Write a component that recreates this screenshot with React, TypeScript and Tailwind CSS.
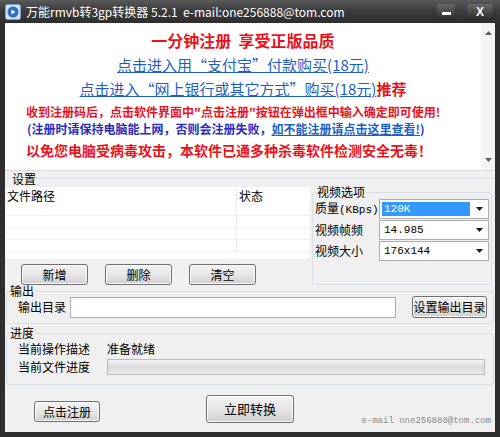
import React from 'react';

const cjk = "font-['Noto_Sans_CJK_SC',sans-serif]";

function WinButton({ label, className }: { label: string; className?: string }) {
  return (
    <button
      className={`flex items-center justify-center rounded-[3px] border border-[#707070] bg-gradient-to-b from-[#f4f4f4] via-[#e6e6e6] to-[#cfcfcf] text-[12px] text-black shadow-[inset_0_0_0_1px_#fcfcfc] ${className ?? ''}`}
    >
      {label}
    </button>
  );
}

function Combo({ value, selected }: { value: string; selected?: boolean }) {
  return (
    <div className="flex h-[20px] w-[110px] items-center border border-[#abadb3] bg-white pl-[2px]">
      <div
        className={`flex h-[14px] flex-1 items-center px-[2px] font-['Liberation_Mono',monospace] text-[11px] ${
          selected ? 'bg-[#3399ff] text-white' : 'text-black'
        }`}
      >
        {value}
      </div>
      <div className="flex w-[18px] justify-center">
        <svg width="7" height="4" viewBox="0 0 7 4">
          <path d="M0 0h7L3.5 4z" fill="#1a1a2a" />
        </svg>
      </div>
    </div>
  );
}

export default function App() {
  return (
    <div className={`flex h-[437px] w-[500px] flex-col overflow-hidden bg-[#2e2e2e] ${cjk}`}>
      {/* title bar */}
      <div className="flex h-[23px] items-center bg-gradient-to-b from-[#5a5a5a] via-[#3a3a3a] to-[#2e2e2e] pl-[5px] pr-[7px]">
        <svg width="16" height="16" viewBox="0 0 16 16">
          <rect x="0.5" y="0.5" width="15" height="15" rx="2" fill="#cfe3f5" stroke="#7aa0c8" />
          <circle cx="8" cy="8" r="5.5" fill="#2f6fc0" />
          <path d="M6.5 5.5v5l4-2.5z" fill="#ffffff" />
        </svg>
        <span className="ml-[5px] text-[12px] text-white">万能rmvb转3gp转换器 5.2.1&nbsp;&nbsp;e-mail:one256888@tom.com</span>
        <div className="ml-auto flex items-center gap-[12px]">
          <div className="flex h-[16px] w-[18px] items-center justify-center rounded-[2px] bg-gradient-to-b from-[#6a6a6a] to-[#2a2a2a]">
            <div className="mt-[4px] h-[3px] w-[9px] bg-white" />
          </div>
          <div className="flex h-[16px] w-[26px] items-center justify-center rounded-[2px] bg-gradient-to-b from-[#6a6a6a] to-[#2a2a2a] text-[12px] font-bold text-white font-['Liberation_Sans',sans-serif]">
            X
          </div>
        </div>
      </div>

      {/* client area */}
      <div className="mx-[5px] flex flex-1 flex-col bg-[#f0f0f0]">
        {/* top info pane */}
        <div className="flex h-[148px] border-b border-[#d9d9d9] bg-white">
          <div className="flex flex-1 flex-col pt-[6px]">
            <div className="h-[22px] text-center text-[16px] font-bold leading-[22px] text-[#e8131d]">一分钟注册&nbsp;&nbsp;享受正版品质</div>
            <div className="mt-[2px] h-[24px] text-center text-[15px] leading-[24px] text-[#1b5fc9] underline">点击进入用“支付宝”付款购买(18元)</div>
            <div className="h-[24px] text-center text-[15px] leading-[24px] text-[#1b5fc9]">
              <span className="underline">点击进入“网上银行或其它方式”购买(18元)</span>
              <span className="font-bold text-[#e8131d]">推荐</span>
            </div>
            <div className="mt-[2px] h-[17px] pl-[21px] text-[12px] font-bold leading-[17px] text-[#e8131d]">
              收到注册码后，点击软件界面中"点击注册"按钮在弹出框中输入确定即可使用!
            </div>
            <div className="h-[17px] pl-[22px] text-[12px] font-bold leading-[17px] text-[#2b2bbf]">
              (注册时请保持电脑能上网，否则会注册失败，<span className="text-[#1b5fc9] underline">如不能注册请点击这里查看!</span>)
            </div>
            <div className="mt-[2px] h-[22px] pl-[21px] text-[14px] font-bold leading-[22px] text-[#e8131d]">
              以免您电脑受病毒攻击，本软件已通多种杀毒软件检测安全无毒！
            </div>
          </div>
          <div className="flex w-[14px] flex-col items-center justify-between bg-[#f4f4f4] py-[8px]">
            <svg width="7" height="4" viewBox="0 0 7 4">
              <path d="M0 4h7L3.5 0z" fill="#606060" />
            </svg>
            <svg width="7" height="4" viewBox="0 0 7 4">
              <path d="M0 0h7L3.5 4z" fill="#606060" />
            </svg>
          </div>
        </div>

        {/* settings */}
        <fieldset className="mx-0 mt-[1px] border-t border-[#d5dfe5] px-0">
          <legend className="ml-[6px] px-[1px] text-[12px] leading-[13px] text-black">设置</legend>
          <div className="flex">
            <div className="mt-[2px] flex w-[305px] flex-col">
              <div className="h-[72px] bg-white">
                <div className="flex h-[17px] items-center text-[12px] leading-[14px] text-black">
                  <div className="w-[232px] border-r border-[#eaeaea] pl-[2px]">文件路径</div>
                  <div className="pl-[2px]">状态</div>
                </div>
                {[0, 1, 2, 3].map((i) => (
                  <div key={i} className="flex h-[12px] border-b border-[#f0f0f0]">
                    <div className="w-[232px] border-r border-[#eaeaea]" />
                  </div>
                ))}
              </div>
              <div className="mt-[5px] flex gap-[17px] pl-[16px]">
                <WinButton label="新增" className="h-[21px] w-[67px]" />
                <WinButton label="删除" className="h-[21px] w-[67px]" />
                <WinButton label="清空" className="h-[21px] w-[67px]" />
              </div>
            </div>
            <fieldset className="ml-[2px] mr-[3px] mt-[1px] h-[99px] flex-1 rounded-[3px] border border-[#d5dfe5] px-[2px]">
              <legend className="ml-[1px] px-[1px] text-[12px] leading-[12px] text-black">视频选项</legend>
              <div className="mt-[1px] flex flex-col gap-[1px]">
                <div className="flex items-center justify-between">
                  <span className="text-[12px] leading-[14px] text-black">
                    质量<span className="font-['Liberation_Mono',monospace] text-[11px]">(KBps)</span>
                  </span>
                  <Combo value="120K" selected />
                </div>
                <div className="flex items-center justify-between">
                  <span className="text-[12px] leading-[14px] text-black">视频帧频</span>
                  <Combo value="14.985" />
                </div>
                <div className="flex items-center justify-between">
                  <span className="text-[12px] leading-[14px] text-black">视频大小</span>
                  <Combo value="176x144" />
                </div>
              </div>
            </fieldset>
          </div>
        </fieldset>

        {/* output */}
        <fieldset className="mx-[1px] mt-0 h-[39px] rounded-[3px] border border-[#d5dfe5] px-0">
          <legend className="ml-[2px] px-[1px] text-[12px] leading-[12px] text-black">输出</legend>
          <div className="-mt-[1px] flex items-center pl-[11px]">
            <span className="text-[12px] text-black">输出目录</span>
            <div className="ml-[4px] h-[21px] w-[326px] border border-[#abadb3] bg-white" />
            <WinButton label="设置输出目录" className="ml-[16px] h-[22px] w-[75px]" />
          </div>
        </fieldset>

        {/* progress */}
        <fieldset className="mx-[1px] mt-[3px] h-[58px] rounded-[3px] border border-[#d5dfe5] px-0">
          <legend className="ml-[2px] px-[1px] text-[12px] leading-[12px] text-black">进度</legend>
          <div className="flex h-[19px] items-center pl-[11px] text-[12px] text-black">
            <span className="w-[89px]">当前操作描述</span>
            <span>准备就绪</span>
          </div>
          <div className="flex items-center pl-[11px] text-[12px] text-black">
            <span className="w-[89px]">当前文件进度</span>
            <div className="h-[16px] w-[378px] border border-[#bcbcbc] bg-gradient-to-b from-[#f3f3f3] via-[#dadada] to-[#ececec]" />
          </div>
        </fieldset>

        {/* bottom */}
        <div className="flex flex-1 items-start">
          <WinButton label="点击注册" className="ml-[29px] mt-[16px] h-[21px] w-[66px]" />
          <WinButton label="立即转换" className="ml-[106px] mt-[10px] h-[28px] w-[88px] text-[13px]" />
          <div className="ml-auto mt-[30px] pr-[4px] font-['Liberation_Mono',monospace] text-[9px] text-[#8a8a8a]">
            e-mail one256888@tom.com
          </div>
        </div>
      </div>
      <div className="h-[5px]" />
    </div>
  );
}
